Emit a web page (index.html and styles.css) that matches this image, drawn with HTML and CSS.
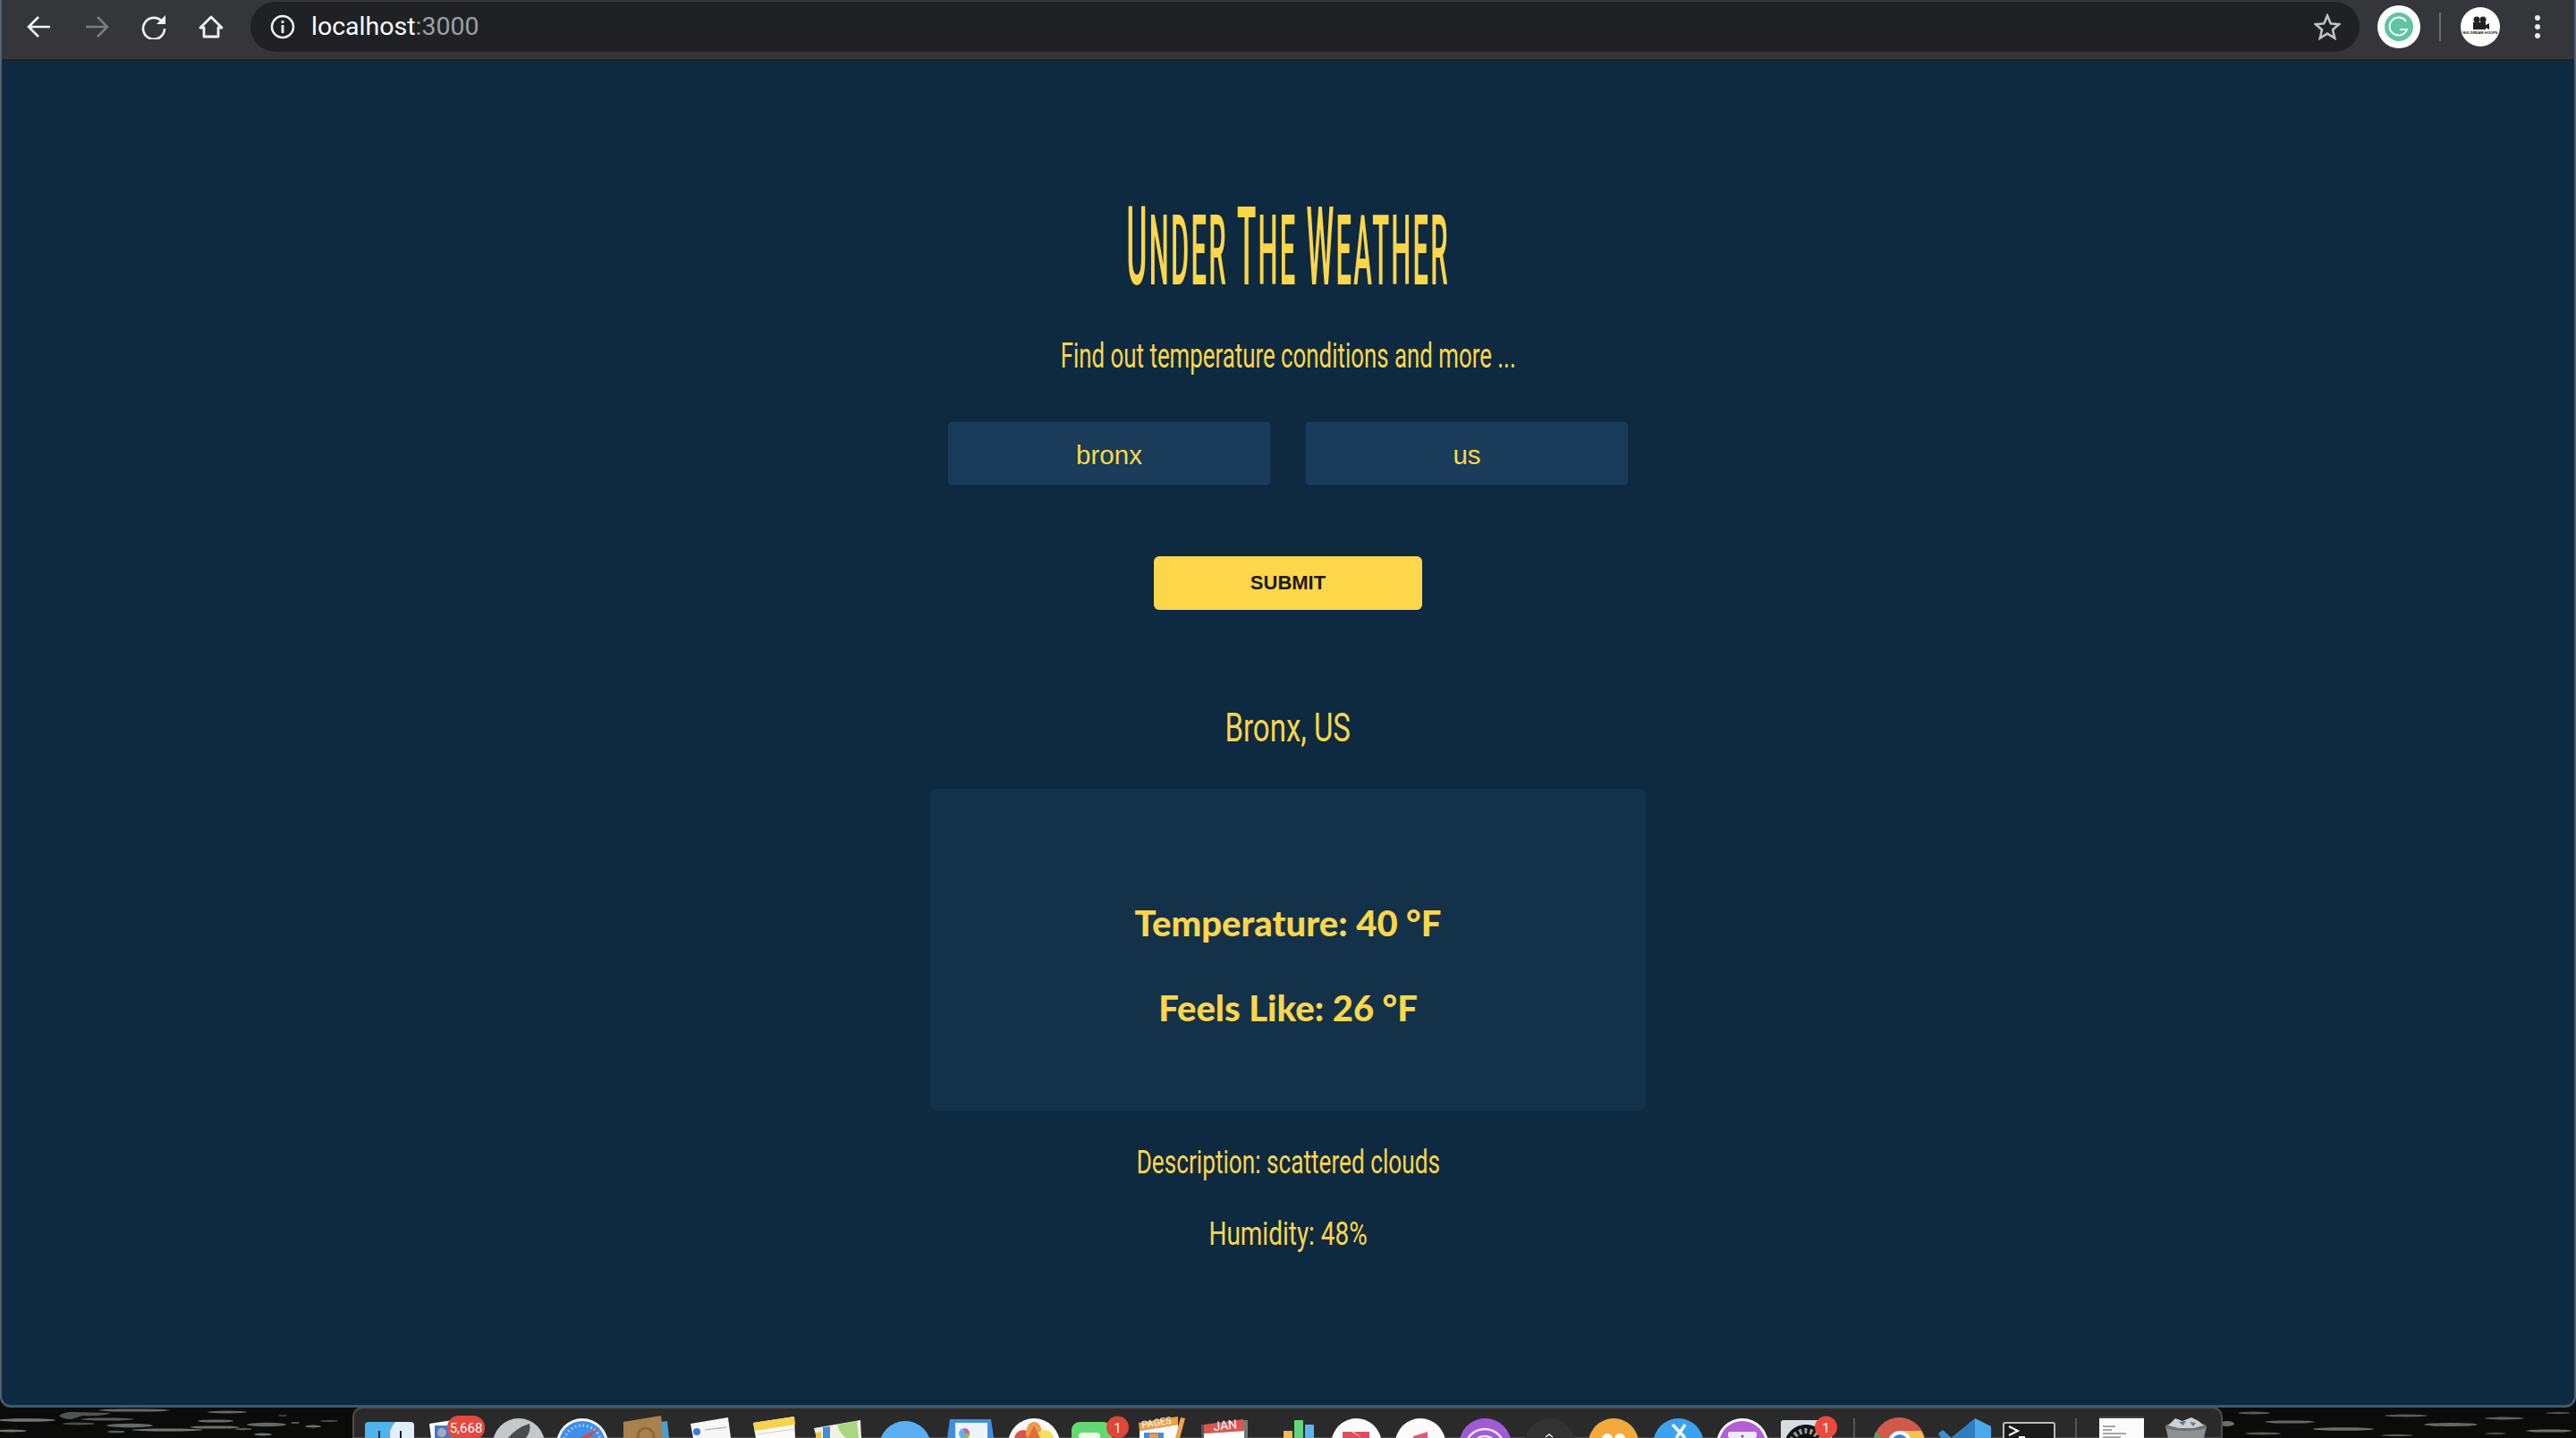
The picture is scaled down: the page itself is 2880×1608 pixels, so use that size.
FILE: index.html
```html
<!DOCTYPE html>
<html lang="en">
<head>
<meta charset="utf-8">
<title>Under The Weather</title>
<link rel="stylesheet" href="styles.css">
</head>
<body>
<svg class="desktop" viewBox="0 1560 2880 48" aria-hidden="true">
  <g fill="#8d9192">
    <ellipse cx="30" cy="1588" rx="32" ry="1.8" opacity=".8"/><ellipse cx="150" cy="1577" rx="40" ry="1.6" opacity=".7"/>
    <path d="M66 1583q8-5 18-4l40 1q-10 4-32 3l-12 4q-10 0-14-4z" opacity=".55"/>
    <ellipse cx="120" cy="1587" rx="30" ry="1.5" opacity=".6"/><ellipse cx="88" cy="1592" rx="18" ry="1.4" opacity=".5"/>
    <ellipse cx="145" cy="1594" rx="26" ry="2.2" opacity=".7"/><ellipse cx="187" cy="1599" rx="40" ry="1.5" opacity=".8"/>
    <ellipse cx="12" cy="1600" rx="18" ry="1.5" opacity=".8"/><ellipse cx="130" cy="1601" rx="10" ry="1.3" opacity=".6"/>
    <ellipse cx="254" cy="1579" rx="22" ry="1.4" opacity=".7"/><ellipse cx="241" cy="1589" rx="20" ry="1.6" opacity=".7"/>
    <ellipse cx="240" cy="1596" rx="28" ry="1.6" opacity=".75"/><ellipse cx="298" cy="1593" rx="22" ry="2.2" opacity=".7"/>
    <ellipse cx="272" cy="1598" rx="10" ry="1.2" opacity=".6"/><ellipse cx="350" cy="1595" rx="9" ry="1.4" opacity=".75"/>
    <ellipse cx="330" cy="1591" rx="5" ry="1" opacity=".6"/><ellipse cx="294" cy="1604" rx="10" ry="1.4" opacity=".8"/>
    <ellipse cx="368" cy="1589" rx="10" ry="1" opacity=".5"/><ellipse cx="316" cy="1583" rx="5" ry="1" opacity=".4"/>
    <ellipse cx="2520" cy="1580" rx="18" ry="1.5" opacity=".6"/><ellipse cx="2490" cy="1592" rx="8" ry="3" opacity=".75"/>
    <ellipse cx="2560" cy="1590" rx="28" ry="1.6" opacity=".7"/><ellipse cx="2620" cy="1598" rx="34" ry="1.8" opacity=".75"/>
    <ellipse cx="2690" cy="1583" rx="24" ry="1.4" opacity=".6"/><ellipse cx="2740" cy="1593" rx="30" ry="2" opacity=".7"/>
    <ellipse cx="2800" cy="1586" rx="22" ry="1.5" opacity=".65"/><ellipse cx="2850" cy="1600" rx="26" ry="1.6" opacity=".75"/>
    <ellipse cx="2530" cy="1603" rx="20" ry="1.4" opacity=".6"/><ellipse cx="2860" cy="1580" rx="14" ry="1.2" opacity=".5"/>
    <ellipse cx="2680" cy="1605" rx="18" ry="1.2" opacity=".6"/><ellipse cx="2790" cy="1603" rx="12" ry="1.2" opacity=".5"/>
  </g>
  <path d="M395 1608v-22q0-12 12-12h2065q12 0 12 12v22z" fill="#2a2a2a" stroke="#4d4d4d" stroke-width="2"/>
  <!-- finder -->
  <path d="M408 1594q0-4 4-4h30q-8 8-6 18h-28z" fill="#4db4ee"/><path d="M442 1590h17q4 0 4 4v14h-27q-2-10 6-18z" fill="#dff0fb"/>
  <rect x="423" y="1600" width="2" height="8" fill="#222"/><rect x="447" y="1600" width="2" height="8" fill="#222"/>
  <!-- mail -->
  <path d="M480 1592l26-4v20h-24z" fill="#fff"/><rect x="486" y="1594" width="20" height="14" fill="#3f7cc9"/><circle cx="494" cy="1602" r="5" fill="#aab"/>
  <rect x="500" y="1583" width="42" height="27" rx="13" fill="#e5483d"/>
  <text x="521" y="1602" class="badge-small">5,668</text>
  <!-- launchpad -->
  <circle cx="580" cy="1615" r="29" fill="#c3c9cb"/><path d="M592 1592q-14 4-24 16h20q6-8 4-16z" fill="#4a4d50"/>
  <!-- safari -->
  <circle cx="651" cy="1615" r="29" fill="#f4f6f8"/><circle cx="651" cy="1615" r="26" fill="#3f8fea"/><circle cx="651" cy="1615" r="21" fill="none" stroke="#bcd9f7" stroke-width="3" stroke-dasharray="1.5 3"/>
  <path d="M671 1596l-26 14 7 4z" fill="#e2473c"/>
  <!-- contacts -->
  <path d="M697 1590l42-7 3 25h-45z" fill="#a9814c"/><path d="M739 1590l7-1 2 19h-7z" fill="#4d9fd0"/><circle cx="722" cy="1606" r="9" fill="none" stroke="#8d6a3a" stroke-width="3"/>
  <!-- reminders -->
  <path d="M772 1592l42-7 3 23h-42z" fill="#f7f7f7"/><circle cx="779" cy="1601" r="4" fill="#3f77e0"/><path d="M788 1599l24-3" stroke="#bbb" stroke-width="1.5"/>
  <!-- notes -->
  <path d="M842 1591l46-7 1 24h-44z" fill="#fbfbf6"/><path d="M842 1591l46-7 1 9-45 7z" fill="#f8d24d"/><path d="M846 1604l42-6" stroke="#ccc"/>
  <!-- maps -->
  <path d="M910 1597l52-9 1 20h-50z" fill="#f2f0e6"/><path d="M920 1596l8-1v13h-8z" fill="#3f8ed8"/><path d="M936 1593l22-4 2 19h-14q-8-6-10-15z" fill="#a8d77f"/><path d="M912 1602l6-1v7h-6z" fill="#f4c14a"/>
  <!-- blue -->
  <circle cx="1012" cy="1618" r="29" fill="#5caef5"/>
  <!-- keynote -->
  <path d="M1062 1587h46l3 21h-52z" fill="#3f8fe0"/><rect x="1068" y="1591" width="36" height="17" fill="#eef3f8"/><circle cx="1078" cy="1603" r="6" fill="#5bb8e8"/><path d="M1078 1603v-6a6 6 0 0 1 6 6z" fill="#d85ca8"/><path d="M1078 1603h6a6 6 0 0 1-4 6z" fill="#8bc34a"/>
  <!-- photos -->
  <circle cx="1156" cy="1615" r="29" fill="#fafafa"/><circle cx="1144" cy="1609" r="10" fill="#d8564a"/><ellipse cx="1156" cy="1602" rx="9" ry="12" fill="#ee9a4d"/><circle cx="1168" cy="1609" r="10" fill="#f4e05a"/><path d="M1156 1594l-7 14h14z" fill="#df6f35"/>
  <!-- facetime / messages -->
  <rect x="1198" y="1590" width="45" height="40" rx="9" fill="#64d873"/><rect x="1206" y="1602" width="24" height="10" rx="4" fill="#e9f9eb"/>
  <circle cx="1249.500" cy="1596" r="12.500" fill="#df4538"/><text x="1249.500" y="1602" class="badge-small">1</text>
  <!-- pages -->
  <path d="M1273 1591l44-7v9l-43 7z" fill="#f4a03d"/><path d="M1274 1600l43-7v15h-43z" fill="#fdfdfd"/><rect x="1279" y="1602" width="22" height="6" fill="#3f8de0"/><rect x="1285" y="1603" width="10" height="5" fill="#ef9a3d"/><path d="M1320 1585l5 1-6 22h-5z" fill="#eea54d"/>
  <text class="pages-label" transform="translate(1277 1597) rotate(-9)">PAGES</text>
  <!-- calendar -->
  <rect x="1343" y="1593" width="3" height="15" fill="#555"/><rect x="1390" y="1588" width="5" height="20" fill="#777"/>
  <path d="M1346 1593l44-6 1 13-45 3z" fill="#d9574e"/><path d="M1346 1603l45-3v8h-45z" fill="#fdfdfd"/>
  <text class="cal-label" transform="translate(1357 1600) rotate(-6)">JAN</text>
  <!-- numbers -->
  <rect x="1435" y="1600" width="10" height="8" fill="#f4b75a"/><rect x="1447" y="1588" width="10" height="20" rx="1" fill="#62d67f"/><rect x="1459" y="1593" width="10" height="15" rx="1" fill="#5cb6ee"/>
  <!-- news -->
  <circle cx="1516.500" cy="1614" r="28" fill="#fbfbfb"/><path d="M1501 1601h10l12 7h-22zM1513 1601h18v7h-8z" fill="#dd4f5c"/>
  <!-- music -->
  <circle cx="1588" cy="1614" r="28" fill="#fbfbfb"/><path d="M1580 1606l16-5v7h-16z" fill="#e35a74"/>
  <!-- podcasts -->
  <circle cx="1660.500" cy="1615" r="29" fill="#a05ad6"/><circle cx="1660" cy="1620" r="22" fill="none" stroke="#f0e4fa" stroke-width="2.500"/><circle cx="1660" cy="1620" r="14" fill="none" stroke="#f0e4fa" stroke-width="2.500"/>
  <!-- dark -->
  <circle cx="1732.500" cy="1614" r="28" fill="#333"/><path d="M1728 1607l4-3 4 3" fill="none" stroke="#eee" stroke-width="1.500"/>
  <!-- orange -->
  <circle cx="1804" cy="1614" r="28" fill="#f3aa3c"/><circle cx="1797" cy="1609" r="6" fill="#fff"/><circle cx="1811" cy="1609" r="6" fill="#fff"/>
  <!-- blue a -->
  <circle cx="1876.500" cy="1614" r="28" fill="#3ba2ef"/><path d="M1870 1593l14 15M1884 1593l-10 15" stroke="#f0f7ff" stroke-width="3.500"/>
  <!-- purple -->
  <circle cx="1948" cy="1615" r="29" fill="#fff"/><circle cx="1948" cy="1615" r="26" fill="#b25fd8"/><rect x="1932" y="1601" width="32" height="7" rx="2" fill="#f4e6fb"/><circle cx="1948" cy="1606" r="1.500" fill="#8a3ab8"/>
  <!-- prefs -->
  <rect x="1991" y="1588" width="57" height="22" rx="3" fill="#d5dde2"/><circle cx="2019" cy="1617" r="24" fill="#111"/><circle cx="2019" cy="1617" r="17" fill="none" stroke="#999" stroke-width="6" stroke-dasharray="3 3"/>
  <circle cx="2041.500" cy="1596" r="12.500" fill="#ea4a3d"/><text x="2041.500" y="1602" class="badge-small">1</text>
  <rect x="2072" y="1586" width="2" height="22" fill="#555"/>
  <!-- chrome -->
  <circle cx="2123.500" cy="1614" r="29" fill="#cf5a4c"/><path d="M2097 1601a29 29 0 0 0-2 13v6h20z" fill="#4ea866"/><path d="M2124 1600h24a29 29 0 0 1 4 14h-28z" fill="#f2c14e"/><circle cx="2124" cy="1613" r="13" fill="#fff"/><circle cx="2124" cy="1613" r="9" fill="#3f7fe0"/>
  <!-- vscode -->
  <path d="M2208 1586l18 9v13h-18z" fill="#4aa8ee"/><path d="M2208 1586l-27 22h27z" fill="#2f7fc0"/><path d="M2167 1603l5-4 10 9h-12z" fill="#3a8fd4"/>
  <!-- terminal -->
  <rect x="2240" y="1591" width="57" height="20" rx="2" fill="#1b1b1b" stroke="#b9bdbf" stroke-width="2"/>
  <path d="M2246 1595l10 5-10 5" fill="none" stroke="#fff" stroke-width="2"/><rect x="2257" y="1606" width="7" height="2" fill="#fff"/>
  <rect x="2320" y="1586" width="2" height="22" fill="#555"/>
  <!-- doc -->
  <rect x="2347" y="1584" width="50" height="24" fill="#fbfbfb"/><rect x="2347" y="1584" width="50" height="2" fill="#444"/><path d="M2351 1595h14M2351 1599h10M2351 1603h26M2351 1607h20" stroke="#555"/>
  <!-- trash -->
  <path d="M2421 1595h46l-3 13h-40z" fill="#8e9194"/><ellipse cx="2444" cy="1595" rx="23" ry="5" fill="#6d7073"/><path d="M2424 1594l8-8 8 3 10-4 8 4 6 5-12 3-16 0z" fill="#cfcfcf"/><path d="M2436 1590l5 4 3-5zM2448 1590l4 5 3-4z" fill="#4d7bb0"/>
</svg>

<div class="window">
  <header class="toolbar">
    <nav class="nav">
      <svg class="nav-icon" viewBox="0 0 28 28"><path d="M26 14H3M13 3 2 14l11 11" fill="none" stroke="#f1f3f4" stroke-width="2.600"/></svg>
      <svg class="nav-icon" viewBox="0 0 28 28"><path d="M2 14h23M15 3l11 11-11 11" fill="none" stroke="#7b7c7f" stroke-width="2.600"/></svg>
      <svg class="nav-icon" viewBox="0 0 28 28"><path d="M23.500 8.500A12 12 0 1 0 26 16" fill="none" stroke="#f1f3f4" stroke-width="2.600"/><path d="M27 1v10H17z" fill="#f1f3f4"/></svg>
      <svg class="nav-icon" viewBox="0 0 28 28"><path d="M14 3 2 15h4v10h16V15h4z" fill="none" stroke="#f1f3f4" stroke-width="2.800" stroke-linejoin="round"/></svg>
    </nav>
    <div class="omnibox">
      <svg class="info-icon" viewBox="0 0 28 28"><circle cx="14" cy="14" r="12" fill="none" stroke="#f1f3f4" stroke-width="2.500"/><rect x="12.600" y="12" width="2.800" height="9" fill="#f1f3f4"/><rect x="12.600" y="7" width="2.800" height="3" fill="#f1f3f4"/></svg>
      <span class="url">localhost<span class="url-port">:3000</span></span>
      <svg class="star-icon" viewBox="0 0 30 30"><path d="M15 2.500l3.700 8.800 9.500.8-7.200 6.200 2.200 9.300-8.200-5-8.200 5 2.200-9.300-7.200-6.200 9.500-.8z" fill="none" stroke="#bdc1c6" stroke-width="2.600"/></svg>
    </div>
    <div class="extensions">
      <svg class="ext-grammarly" viewBox="0 0 48 48"><circle cx="24" cy="24" r="24" fill="#fff"/><circle cx="24" cy="24" r="16" fill="#5ec4a1"/><path d="M32 18a10 10 0 1 0 1 9h-8" fill="none" stroke="#fff" stroke-width="2"/></svg>
      <span class="ext-divider"></span>
      <svg class="ext-avatar" viewBox="0 0 44 44"><circle cx="22" cy="22" r="22" fill="#fff"/><circle cx="18" cy="14" r="3.500" fill="#222"/><circle cx="25" cy="14" r="3.500" fill="#222"/><rect x="14" y="17" width="14" height="8" fill="#222"/><path d="M28 20l4-2v7l-4-2z" fill="#222"/><text x="22" y="29.500" class="avatar-label">BIG DREAM HOOPS</text></svg>
      <svg class="ext-menu" viewBox="0 0 8 28"><circle cx="4" cy="4" r="3" fill="#e8eaed"/><circle cx="4" cy="14" r="3" fill="#e8eaed"/><circle cx="4" cy="24" r="3" fill="#e8eaed"/></svg>
    </div>
  </header>

  <main class="app">
    <h1 class="title"><span class="condense title-text"><span class="cap">U</span>NDER <span class="cap">T</span>HE <span class="cap">W</span>EATHER</span></h1>
    <p class="tagline"><span class="condense tagline-text">Find out temperature conditions and more ...</span></p>
    <form class="search">
      <input class="field" type="text" value="bronx">
      <input class="field" type="text" value="us">
    </form>
    <button class="submit" type="button">SUBMIT</button>
    <h2 class="city"><span class="condense city-text">Bronx, US</span></h2>
    <section class="card">
      <p class="reading">Temperature: 40 °F</p>
      <p class="reading">Feels Like: 26 °F</p>
    </section>
    <p class="detail"><span class="condense detail-desc">Description: scattered clouds</span></p>
    <p class="detail"><span class="condense detail-hum">Humidity: 48%</span></p>
  </main>
</div>
</body>
</html>
```
FILE: styles.css
```css
* { box-sizing: border-box; }
html, body { margin: 0; height: 100%; }
body {
  position: relative;
  height: 1608px;
  overflow: hidden;
  background: #0b0b0a;
  font-family: "Liberation Sans", Arial, sans-serif;
}
.desktop {
  position: absolute;
  left: 0;
  bottom: 0;
  width: 2880px;
  height: 48px;
}
.badge-small { font: 15px "Roboto", sans-serif; fill: #fff; text-anchor: middle; }
.pages-label { font: 11px "Roboto", sans-serif; fill: #fff; }
.cal-label { font: 14px "Roboto", sans-serif; fill: #fff; }
.avatar-label { font: 700 4px "Liberation Sans", sans-serif; fill: #111; text-anchor: middle; }

.window {
  position: relative;
  height: 1574px;
  display: flex;
  flex-direction: column;
  background: #0e2a41;
  border-left: 2px solid #4f6270;
  border-right: 2px solid #4f6270;
  border-bottom: 3px solid #3d5a70;
  border-radius: 0 0 12px 12px;
  overflow: hidden;
}

.toolbar {
  flex: 0 0 68px;
  display: flex;
  align-items: flex-start;
  background: #35363a;
  border-bottom: 2px solid #202124;
  padding: 2px 0 0 0;
}
.nav {
  flex: 0 0 278px;
  display: flex;
  gap: 36px;
  padding: 14px 0 0 28px;
}
.nav-icon { width: 28px; height: 28px; }
.omnibox {
  flex: 0 0 2358px;
  height: 56px;
  display: flex;
  align-items: center;
  padding: 0 21px 0 22px;
  background: #202124;
  border-radius: 28px;
}
.info-icon { width: 28px; height: 28px; flex: none; }
.url {
  flex: 1;
  margin-left: 18px;
  font: 28.500px/1 "Roboto", sans-serif;
  color: #fff;
}
.url-port { color: #9aa0a6; }
.star-icon { width: 30px; height: 30px; flex: none; }
.extensions {
  flex: 1;
  display: flex;
  align-items: center;
  height: 56px;
  padding-left: 20px;
}
.ext-grammarly { width: 48px; height: 48px; }
.ext-divider { width: 2px; height: 32px; margin: 0 22px 0 21px; background: #6a6b6e; }
.ext-avatar { width: 44px; height: 44px; }
.ext-menu { width: 8px; height: 28px; margin-left: 38px; }

.app {
  flex: 1;
  display: flex;
  flex-direction: column;
  align-items: center;
  color: #fdd64a;
}
.condense {
  display: inline-block;
  white-space: nowrap;
  transform-origin: center;
}
.title {
  margin: 153px 0 0;
  font: 500 109px/110px "Roboto", sans-serif;
  letter-spacing: 8px;
}
.title-text { transform: scaleX(0.284); }
.cap { font-size: 123px; }
.tagline {
  margin: 39px 0 0;
  font: 38px/46px "Roboto", sans-serif;
}
.tagline-text { transform: scaleX(0.68); }
.search {
  display: flex;
  gap: 40px;
  margin-top: 51px;
}
.field {
  width: 360px;
  height: 70px;
  border: 0;
  border-radius: 4px;
  background: #1a3c5a;
  color: #fdd64a;
  font: 29.500px "Liberation Sans", sans-serif;
  text-align: center;
  padding: 4px 0 0;
}
.submit {
  width: 300px;
  height: 60px;
  margin-top: 80px;
  border: 0;
  border-radius: 6px;
  background: #fdd64a;
  color: #1d1c1a;
  font: 700 22px "Liberation Sans", sans-serif;
}
.city {
  margin: 102px 0 0;
  font: 400 44px/60px "Roboto", sans-serif;
}
.city-text { transform: scaleX(0.75); }
.card {
  width: 800px;
  height: 360px;
  margin-top: 38px;
  display: flex;
  flex-direction: column;
  align-items: center;
  justify-content: center;
  gap: 40px;
  padding-top: 36px;
  background: #13324a;
  border-radius: 8px;
}
.reading {
  margin: 0;
  font: 900 40px/55px "Lato", sans-serif;
}
.detail {
  margin: 36px 0 0;
  font: 36px/44px "Roboto", sans-serif;
}
.detail-desc { transform: scaleX(0.727); }
.detail-hum { transform: scaleX(0.777); }
```
